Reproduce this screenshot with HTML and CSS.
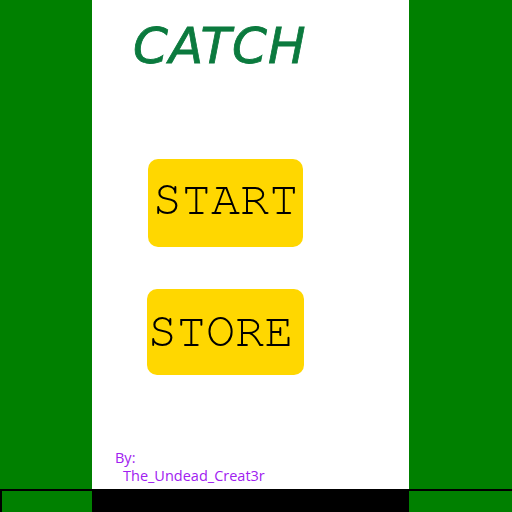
FILE: index.html
```html
<!DOCTYPE html>
<html>
<head>
<meta charset="utf-8">
<link rel="stylesheet" href="styles.css">
</head>
<body>
<div class="main">
  <div class="side"></div>
  <div class="column">
    <h1 class="title">CATCH</h1>
    <div class="btn btn-start">START</div>
    <div class="btn btn-store">STORE</div>
    <div class="credit">
      <div class="by">By:</div>
      <div class="author">The_Undead_Creat3r</div>
    </div>
  </div>
  <div class="side"></div>
</div>
<div class="footer">
  <div class="fside"></div>
  <div class="fcenter"></div>
  <div class="fside fright"></div>
</div>
</body>
</html>
```
FILE: styles.css
```css
html, body {
  margin: 0;
  padding: 0;
  width: 512px;
  height: 512px;
  overflow: hidden;
  background: #008000;
}
body {
  display: flex;
  flex-direction: column;
}
.main {
  display: flex;
  height: 489px;
}
.side {
  width: 92px;
  background: #008000;
}
.side:last-child {
  width: 103px;
}
.column {
  width: 317px;
  background: #ffffff;
  display: flex;
  flex-direction: column;
}
.title {
  margin: 16px 0 0 41px;
  font-family: "DejaVu Sans", sans-serif;
  font-style: italic;
  font-weight: normal;
  font-size: 50px;
  line-height: 60px;
  color: #0b7a3e;
  letter-spacing: 1px;
  -webkit-text-stroke: 0.8px #0b7a3e;
}
.btn {
  background: #ffd700;
  border-radius: 10px;
  display: flex;
  align-items: center;
  justify-content: center;
  box-sizing: border-box;
  font-family: "Nimbus Mono PS", "Nimbus Mono L", "FreeMono", "Courier 10 Pitch", "Courier", "Liberation Mono", monospace;
  font-size: 48.5px;
  color: #000;
}
.btn-start {
  margin: 83px 0 0 56px;
  width: 155px;
  height: 88px;
  padding-bottom: 7px;
}
.btn-store {
  margin: 42px 0 0 55px;
  width: 157px;
  height: 86px;
  padding-right: 10px;
  padding-bottom: 2px;
}
.credit {
  margin: 74px 0 0 23px;
  font-family: "Open Sans", sans-serif;
  font-size: 14.5px;
  line-height: 18px;
  color: #a020f0;
}
.author {
  padding-left: 8px;
}
.footer {
  display: flex;
  height: 21px;
  border-top: 2px solid #000;
  border-left: 2px solid #000;
}
.fside {
  width: 90px;
  background: #008000;
}
.fcenter {
  width: 317px;
  background: #000;
}
.fright {
  flex: 1;
}
```
